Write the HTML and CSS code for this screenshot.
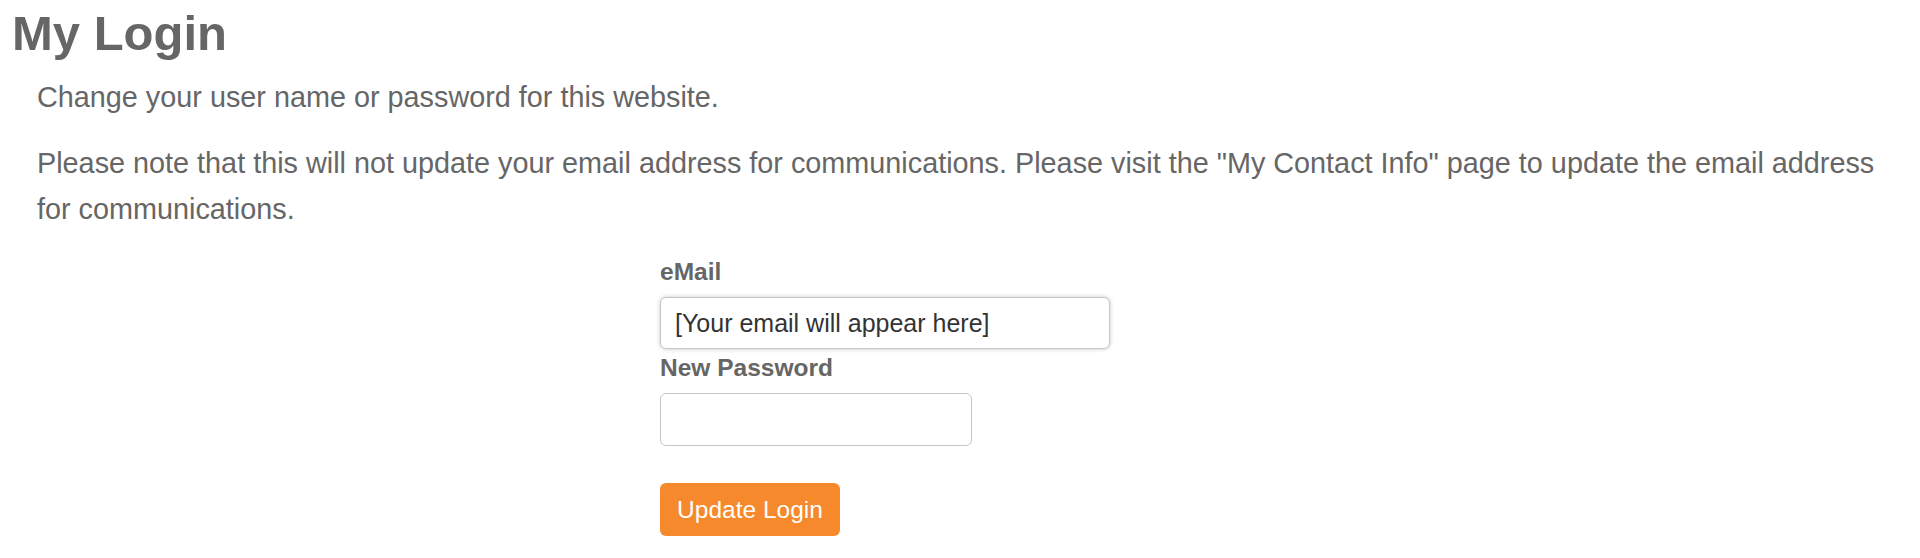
FILE: index.html
```html
<!DOCTYPE html>
<html lang="en">
<head>
  <meta charset="UTF-8">
  <meta name="viewport" content="width=device-width, initial-scale=1.0">
  <title>My Login</title>
  <link rel="stylesheet" href="styles.css">
</head>
<body>
  <h1 class="page-title">My Login</h1>
  <div class="content">
    <p>Change your user name or password for this website.</p>
    <p>Please note that this will not update your email address for communications. Please visit the "My Contact Info" page to update the email address for communications.</p>

    <form class="login-form" onsubmit="return false">
      <label class="field-label" for="email">eMail</label>
      <input class="field email" id="email" type="text" value="[Your email will appear here]">
      <label class="field-label" for="newPassword">New Password</label>
      <input class="field password" id="newPassword" type="password">
      <button class="btn" type="submit">Update Login</button>
    </form>
  </div>
</body>
</html>
```

FILE: styles.css
```css
* { box-sizing: border-box; }
body {
  margin: 0;
  font-family: "Liberation Sans", Arial, sans-serif;
  color: #666;
  background: #fff;
}
.page-title {
  margin: 5px 0 0;
  padding-left: 12px;
  font-size: 49px;
  line-height: 56px;
  font-weight: bold;
  color: #666;
}
.content { padding: 13px 37px 0; }
.content p {
  margin: 0 -16px 19px 0;
  font-size: 28.8px;
  line-height: 46.5px;
  color: #666;
}
.login-form {
  width: 600px;
  margin: 0 auto;
  padding-top: 6.5px;
  display: flex;
  flex-direction: column;
  align-items: flex-start;
}
.field-label {
  display: block;
  font-size: 24.5px;
  font-weight: bold;
  line-height: 27px;
  margin-bottom: 12px;
  color: #666;
}
.field {
  height: 52px;
  padding: 0 14px;
  font-family: "Liberation Sans", Arial, sans-serif;
  font-size: 25px;
  color: #333;
  background: #fff;
  border: 1px solid #c6c6c6;
  border-radius: 6px;
  outline: none;
  margin-bottom: 5px;
}
.field.email {
  width: 450px;
  box-shadow: 0 0 4px rgba(0,0,0,0.22);
}
.field.password {
  width: 312px;
  height: 53px;
}
.btn {
  width: 180px;
  height: 53px;
  margin-top: 32px;
  padding: 0;
  font-family: "Liberation Sans", Arial, sans-serif;
  font-size: 24.5px;
  color: #fff;
  background-color: #f5892c;
  border: none;
  border-radius: 6px;
  cursor: pointer;
}
.btn:hover { background-color: #e57a1f; }
```
